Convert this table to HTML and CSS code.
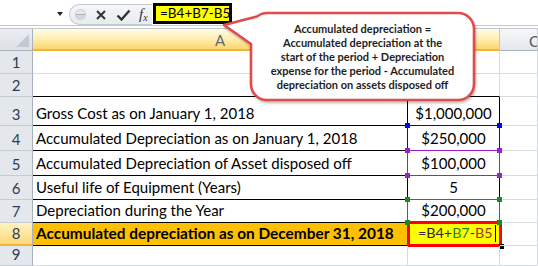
FILE: index.html
```html
<!DOCTYPE html>
<html>
<head>
<meta charset="utf-8">
<link rel="stylesheet" href="styles.css">
</head>
<body>
<div class="app">
  <div class="fbar">
    <div class="namebox"><span class="dd"></span></div>
    <div class="pill">
      <span class="knob"></span>
      <svg class="ico" width="12" height="12" viewBox="0 0 12 12"><path d="M2 2 L10 10 M10 2 L2 10" stroke="#333" stroke-width="2" fill="none"/></svg>
      <svg class="ico" width="15" height="12" viewBox="0 0 15 12"><path d="M1.5 6.5 L5.5 10.5 L13.5 1.5" stroke="#333" stroke-width="2.4" fill="none"/></svg>
      <span class="fx">f<sub>x</sub></span>
    </div>
    <div class="fbox">=B4+B7-B5</div>
    <div class="frest"></div>
  </div>
  <div class="gap"></div>
  <div class="sheet">
    <div class="corner"><span class="tri"></span></div>
    <div class="ch sel">A</div>
    <div class="ch sel"></div>
    <div class="ch cc">C</div>

    <div class="rh">1</div><div class="c"></div><div class="c"></div><div class="c"></div>
    <div class="rh">2</div><div class="c tb"></div><div class="c tb"></div><div class="c"></div>
    <div class="rh">3</div><div class="c a">Gross Cost as on January 1, 2018</div><div class="c b">$1,000,000</div><div class="c"></div>
    <div class="rh">4</div><div class="c a">Accumulated Depreciation as on January 1, 2018</div><div class="c b rng blue">$250,000<i class="h tl"></i><i class="h tr"></i><i class="h bl"></i><i class="h br"></i></div><div class="c"></div>
    <div class="rh">5</div><div class="c a">Accumulated Depreciation of Asset disposed off</div><div class="c b rng purple">$100,000<i class="h tl"></i><i class="h tr"></i><i class="h bl"></i><i class="h br"></i></div><div class="c"></div>
    <div class="rh">6</div><div class="c a">Useful life of Equipment (Years)</div><div class="c b">5</div><div class="c"></div>
    <div class="rh">7</div><div class="c a">Depreciation during the Year</div><div class="c b rng green">$200,000<i class="h tl"></i><i class="h tr"></i><i class="h bl"></i><i class="h br"></i></div><div class="c"></div>
    <div class="rh hl">8</div><div class="c a tot">Accumulated depreciation as on December 31, 2018</div><div class="c edit"><span class="k">=B4+</span><span class="g">B7</span><span class="k">-</span><span class="r">B5</span><span class="caret"></span><i class="fh"></i></div><div class="c"></div>
    <div class="rh">9</div><div class="c"></div><div class="c"></div><div class="c"></div>
  </div>

  <div class="callout">
    <svg class="bubble" width="270" height="100" viewBox="0 0 270 100">
      <path d="M52 5 H243 A16 16 0 0 1 259 21 V76 A16 16 0 0 1 243 92 H52 A16 16 0 0 1 36 76 V36 L9 17 L42 8.5 A16 16 0 0 1 52 5 Z" fill="#fff" stroke="#e14b4b" stroke-width="2.6" stroke-linejoin="round"/>
    </svg>
    <div class="ctext">Accumulated depreciation =<br>Accumulated depreciation at the<br>start of the period + Depreciation<br>expense for the period - Accumulated<br>depreciation on assets disposed off</div>
  </div>
</div>
</body>
</html>
```

FILE: styles.css
```css
* { box-sizing: border-box; }
html, body { margin: 0; padding: 0; background: #fff; }
body { width: 538px; height: 266px; overflow: hidden; font-family: Lato, "Open Sans", sans-serif; }
.app { position: relative; width: 538px; height: 266px; }

.fbar { display: flex; height: 26px; border-bottom: 1px solid #c3c8cf; background: #fff; }
.namebox { width: 69px; position: relative; display: flex; align-items: center; justify-content: flex-end; padding-right: 6px; }
.dd { width: 0; height: 0; border-left: 3.5px solid transparent; border-right: 3.5px solid transparent; border-top: 4px solid #222; margin-top: 2px; }
.pill { margin-top: 4px; height: 21px; width: 83px; border: 1px solid #c4c9d0; border-right: none; border-radius: 11px 0 0 11px; background: linear-gradient(#f5f6f8, #e8ebef); display: flex; align-items: center; padding-left: 5px; gap: 9px; }
.knob { width: 11px; height: 11px; border-radius: 50%; background: linear-gradient(#e6e8eb 0, #e6e8eb 40%, #aeb3ba 40%, #aeb3ba 60%, #d4d7db 60%); border: 1px solid #c9cdd3; }
.ico { display: block; }
.fx { font-family: "Liberation Serif", serif; font-style: italic; font-size: 15px; color: #333; line-height: 1; margin-left: -1px; }
.fx sub { font-size: 10px; vertical-align: -2px; }
.fbox { margin: 3px 0 0 1px; height: 21px; width: 79px; background: #ffff00; border: 3px solid #000; font-family: Lato, sans-serif; font-size: 13.5px; line-height: 15px; color: #000; padding-left: 4px; white-space: nowrap; overflow: hidden; }
.frest { flex: 1; }
.gap { height: 3px; border-bottom: 1px solid #c3c8cf; background: #fff; }

.sheet { display: grid; grid-template-columns: 33px 375px 92px 38px; grid-template-rows: 22px 23px 23px 29px 25px 25px 24px 23px 23px 20px; }
.corner { background: linear-gradient(#eaedf1, #dde1e7); border-right: 1px solid #a9b1bc; border-bottom: 1px solid #a9b1bc; position: relative; }
.tri { position: absolute; right: 3px; bottom: 3px; width: 0; height: 0; border-left: 13px solid transparent; border-bottom: 13px solid #c3c9d1; }
.ch { background: linear-gradient(#f7f8fa, #e3e7ec); border-right: 1px solid #c8cdd4; border-bottom: 1px solid #a9b1bc; font-size: 15px; color: #4b5568; display: flex; align-items: center; justify-content: center; padding-top: 2px; }
.ch.cc { justify-content: flex-start; padding-left: 29px; overflow: hidden; }
.ch.sel { background: linear-gradient(#fffbe9 0%, #fff0b6 45%, #fbd86d 100%); border-bottom: 2px solid #f2b33f; border-right-color: #e9c474; color: #5e6878; }
.rh { background: #e4e7ec; border-right: 1px solid #a9b1bc; border-bottom: 1px solid #c6ccd4; font-size: 15px; color: #2d3d57; display: flex; align-items: flex-end; justify-content: center; padding-bottom: 2px; line-height: 18px; }
.rh.hl { background: linear-gradient(#fff3c2, #fcd97a); border-bottom: 2px solid #f2b33f; }
.c { border-right: 1px solid #d9dcdf; border-bottom: 1px solid #d9dcdf; font-size: 15px; line-height: 18px; color: #000; display: flex; align-items: flex-end; padding-bottom: 3px; position: relative; }
.c.tb { border-bottom-color: #000; }
.c.a { border-bottom-color: #000; border-right-color: #000; padding-left: 3px; white-space: nowrap; }
.c.b { border-bottom-color: #000; border-right-color: #000; justify-content: center; }
.c.tot { background: #ffc000; font-weight: 700; font-size: 15.4px; }
.c.edit { background: #ffff00; border: 3px solid #ff0000; margin: -2px -2px -1px -1px; padding-left: 8px; padding-bottom: 2px; font-size: 14.3px; }
.k { color: #2b2b2b; }
.g { color: #1f8a1f; }
.r { color: #983c1e; }
.caret { display: inline-block; width: 1px; height: 17px; background: #000; margin-left: 2px; align-self: flex-end; margin-bottom: 0; }
.fh { position: absolute; right: -5px; bottom: -5px; width: 5px; height: 5px; background: #000; }

.rng::after { content: ""; position: absolute; left: -1px; top: -1px; right: -1px; bottom: -1px; border: 1px solid var(--rc); pointer-events: none; }
.blue { --rc: #0000ff; }
.purple { --rc: #9a1fd0; }
.green { --rc: #1e8a1e; }
.h { position: absolute; width: 5px; height: 5px; background: var(--rc); z-index: 2; }
.h.tl { left: -3px; top: -3px; }
.h.tr { right: -3px; top: -3px; }
.h.bl { left: -3px; bottom: -3px; }
.h.br { right: -3px; bottom: -3px; }

.callout { position: absolute; left: 215px; top: 8px; width: 270px; height: 100px; }
.bubble { position: absolute; left: 0; top: 0; filter: drop-shadow(1px 2px 1px rgba(0,0,0,0.25)); }
.ctext { position: absolute; left: 36px; top: 5px; width: 223px; height: 87px; display: flex; align-items: center; justify-content: center; text-align: center; font-family: Lato, sans-serif; font-weight: 700; font-size: 11px; line-height: 14px; color: #1e1e1e; }
```
